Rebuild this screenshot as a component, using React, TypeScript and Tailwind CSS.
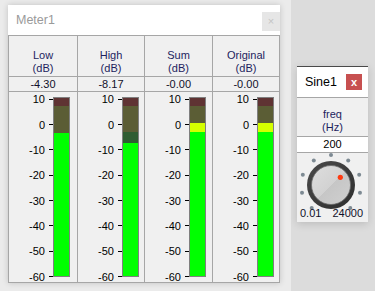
import React from "react";

type Seg = [string, number];
const meters: { name: string; value: string; w: string; segs: Seg[] }[] = [
  { name: "Low", value: "-4.30", w: "w-[69px]", segs: [["#5f3333", 8], ["#5b5d35", 27], ["#00ff00", 143]] },
  { name: "High", value: "-8.17", w: "w-[67px]", segs: [["#5f3333", 8], ["#5b5d35", 26], ["#2f5d32", 11], ["#00ff00", 133]] },
  { name: "Sum", value: "-0.00", w: "w-[68px]", segs: [["#5f3333", 8], ["#5b5d35", 17], ["#d4ff00", 9], ["#00ff00", 144]] },
  { name: "Original", value: "-0.00", w: "w-[67px]", segs: [["#5f3333", 8], ["#5b5d35", 17], ["#d4ff00", 9], ["#00ff00", 144]] },
];

const ticks = [10, 0, -10, -20, -30, -40, -50, -60];

function Meter({ m }: { m: (typeof meters)[number] }) {
  return (
    <div className={`${m.w} shrink-0 flex flex-col border-r border-[#a6a6a6]`}>
      <div className="h-[40px] flex flex-col justify-end items-center text-[11px] leading-[13px] text-[#1e1e5e] pb-[1px]">
        <div>{m.name}</div>
        <div>(dB)</div>
      </div>
      <div className="h-[16px] border-t border-b border-[#a6a6a6] flex items-center justify-center text-[11px] leading-[13px] text-[#10102a]">
        {m.value}
      </div>
      <div className="flex items-start pt-[5px]">
        <div className="relative w-[44px] h-[180px] shrink-0">
          {ticks.map((t, i) => {
            const y = 1.7 + 25.33 * i;
            return (
              <React.Fragment key={t}>
                <div
                  className="absolute right-[8px] h-[13px] leading-[13px] text-[11px] text-black text-right"
                  style={{ top: y - 5.5 }}
                >
                  {t}
                </div>
                <div className="absolute right-0 w-[4px] h-[1px] bg-black" style={{ top: Math.round(y) }} />
              </React.Fragment>
            );
          })}
        </div>
        <div className="w-[17px] h-[180px] border border-[#7f7f7f] flex flex-col shrink-0">
          {m.segs.map(([c, h], i) => (
            <div key={i} style={{ background: c, height: h }} className="w-full shrink-0" />
          ))}
        </div>
      </div>
    </div>
  );
}

function Knob() {
  const cx = 34;
  const cy = 32;
  const dots = [-140, -105, -70, -35, 0, 35, 70, 105, 140].map((a) => {
    const r = (a * Math.PI) / 180;
    return [cx + 30 * Math.sin(r), cy - 30 * Math.cos(r)];
  });
  return (
    <svg width="71" height="68" viewBox="0 0 71 68">
      <defs>
        <linearGradient id="ring" x1="0" y1="0" x2="1" y2="1">
          <stop offset="0" stopColor="#4a4a4a" />
          <stop offset="1" stopColor="#2e2e2e" />
        </linearGradient>
        <linearGradient id="disc" x1="0" y1="0" x2="1" y2="1">
          <stop offset="0" stopColor="#dedede" />
          <stop offset="0.5" stopColor="#d2d2d2" />
          <stop offset="0.5" stopColor="#c6c6c6" />
          <stop offset="1" stopColor="#d0d0d0" />
        </linearGradient>
      </defs>
      {dots.map(([x, y], i) => (
        <circle key={i} cx={x} cy={y} r={2} fill="#7d8a93" />
      ))}
      <circle cx={cx} cy={cy} r={24} fill="url(#ring)" />
      <circle cx={cx} cy={cy} r={19.5} fill="url(#disc)" stroke="#6a6a6a" strokeWidth={0.8} />
      <circle cx={43.3} cy={24.3} r={2.6} fill="#ff3a10" />
    </svg>
  );
}

export default function App() {
  return (
    <div
      className="w-[375px] h-[291px] bg-[#dcdcdc] flex overflow-hidden"
      style={{ fontFamily: '"Liberation Sans", Arial, sans-serif' }}
    >
      <div className="w-[291px] h-full bg-[#ebebeb] pl-[8px] pt-[5px] shrink-0">
        <div className="w-[272px] h-[278px] bg-white flex flex-col shadow-[0_0_6px_rgba(0,0,0,0.18)]">
          <div className="h-[30px] flex items-center justify-between pl-[8px] shrink-0">
            <span className="text-[12.5px] text-[#9a9a9a]">Meter1</span>
            <div className="w-[18px] h-[19px] bg-[#e6e6e6] flex items-center justify-center text-[11px] text-[#c4c4c4] mt-[2px]">
              ×
            </div>
          </div>
          <div className="flex-1 bg-[#f0f0f0] border-l border-t border-b border-[#a6a6a6] flex">
            {meters.map((m) => (
              <Meter key={m.name} m={m} />
            ))}
          </div>
        </div>
      </div>
      <div className="pl-[6px] pt-[66px]">
        <div className="w-[71px] h-[156px] bg-[#f0f0f0] border-t border-[#4a4a4a] flex flex-col shadow-[0_2px_8px_rgba(0,0,0,0.15)]">
          <div className="h-[30px] bg-white flex items-center justify-between pl-[8px] pr-[6px] shrink-0">
            <span className="text-[12.5px] text-black">Sine1</span>
            <div className="w-[16px] h-[16px] bg-[#c75050] flex items-center justify-center text-[11px] text-white font-bold leading-none">
              x
            </div>
          </div>
          <div className="h-[40px] border-t border-b border-[#a6a6a6] flex flex-col justify-end items-center text-[11px] leading-[13px] text-[#1e1e5e] pb-[2px]">
            <div>freq</div>
            <div>(Hz)</div>
          </div>
          <div className="h-[16px] bg-white border-b border-[#a6a6a6] flex items-center justify-center text-[11px] text-black">
            200
          </div>
          <div className="relative flex-1">
            <Knob />
            <div className="absolute left-[3px] top-[54px] text-[11px] leading-[13px] text-[#10102a]">0.01</div>
            <div className="absolute right-[5px] top-[54px] text-[11px] leading-[13px] text-[#10102a]">24000</div>
          </div>
        </div>
      </div>
    </div>
  );
}
